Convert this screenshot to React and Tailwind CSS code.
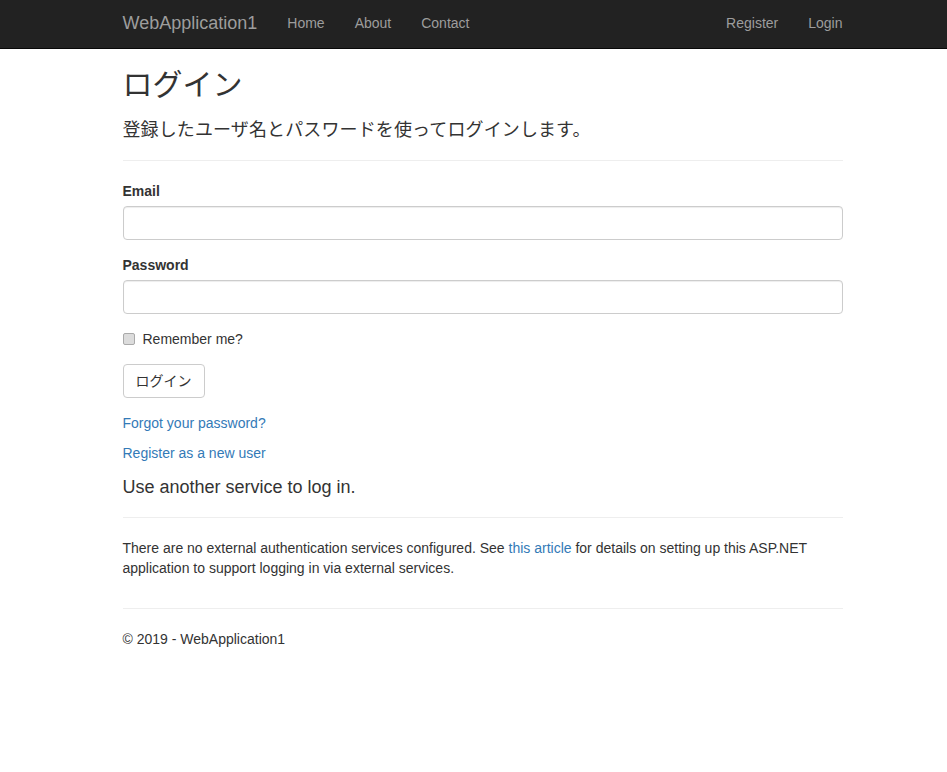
function NavLink({ children }) {
  return (
    <a href="#" className="px-[15px] text-[14px] leading-5 text-[#9d9d9d]">
      {children}
    </a>
  );
}

export default function App() {
  return (
    <div className="min-h-[772px] bg-white text-[14px] leading-5 text-[#333] font-['Liberation_Sans','Noto_Sans_CJK_JP',sans-serif]">
      <nav className="h-[49px] bg-[#222] border-b border-[#080808]">
        <div className="w-[720px] ml-[122.5px] h-[46px] flex items-center">
          <a href="#" className="text-[18px] leading-5 text-[#9d9d9d] mr-[15px]">WebApplication1</a>
          <NavLink>Home</NavLink>
          <NavLink>About</NavLink>
          <NavLink>Contact</NavLink>
          <div className="ml-auto -mr-[15px] flex">
            <NavLink>Register</NavLink>
            <NavLink>Login</NavLink>
          </div>
        </div>
      </nav>

      <main className="w-[720px] ml-[122.5px]">
        <h2 className="mt-[19px] mb-[10px] text-[30px] leading-[33px] font-normal">ログイン</h2>
        <h4 className="mt-[19px] mb-[10px] text-[18px] leading-5 font-normal tracking-[0.12px]">登録したユーザ名とパスワードを使ってログインします。</h4>
        <hr className="mt-[20px] mb-[20px] border-t border-[#eee]" />

        <form>
          <div className="mb-[15px]">
            <label className="block mb-[5px] font-bold">Email</label>
            <input className="block w-full h-[34px] px-3 rounded border border-[#ccc] bg-white shadow-[inset_0_1px_1px_rgba(0,0,0,0.075)]" />
          </div>
          <div className="mb-[15px]">
            <label className="block mb-[5px] font-bold">Password</label>
            <input type="password" className="block w-full h-[34px] px-3 rounded border border-[#ccc] bg-white shadow-[inset_0_1px_1px_rgba(0,0,0,0.075)]" />
          </div>
          <label className="flex items-center h-5 mb-[15px]">
            <input type="checkbox" className="appearance-none w-3 h-3 mr-2 rounded-[2px] border border-[#aaa] bg-[#dcdcdc]" />
            Remember me?
          </label>
          <button type="button" className="block h-[34px] px-3 mb-[15px] rounded border border-[#ccc] bg-white text-[#333]">ログイン</button>
          <p className="mb-[10px]"><a href="#" className="text-[#337ab7]">Forgot your password?</a></p>
          <p className="mb-[10px]"><a href="#" className="text-[#337ab7]">Register as a new user</a></p>
        </form>

        <h4 className="mt-[14px] mb-[10px] text-[18px] leading-5 font-normal">Use another service to log in.</h4>
        <hr className="mt-[20px] mb-[20px] border-t border-[#eee]" />
        <p className="mb-[30px]">
          There are no external authentication services configured. See <a href="#" className="text-[#337ab7]">this article</a> for details on setting up this ASP.NET application to support logging in via external services.
        </p>

        <hr className="mt-[20px] mb-[20px] border-t border-[#eee]" />
        <footer><p>© 2019 - WebApplication1</p></footer>
      </main>
    </div>
  );
}
